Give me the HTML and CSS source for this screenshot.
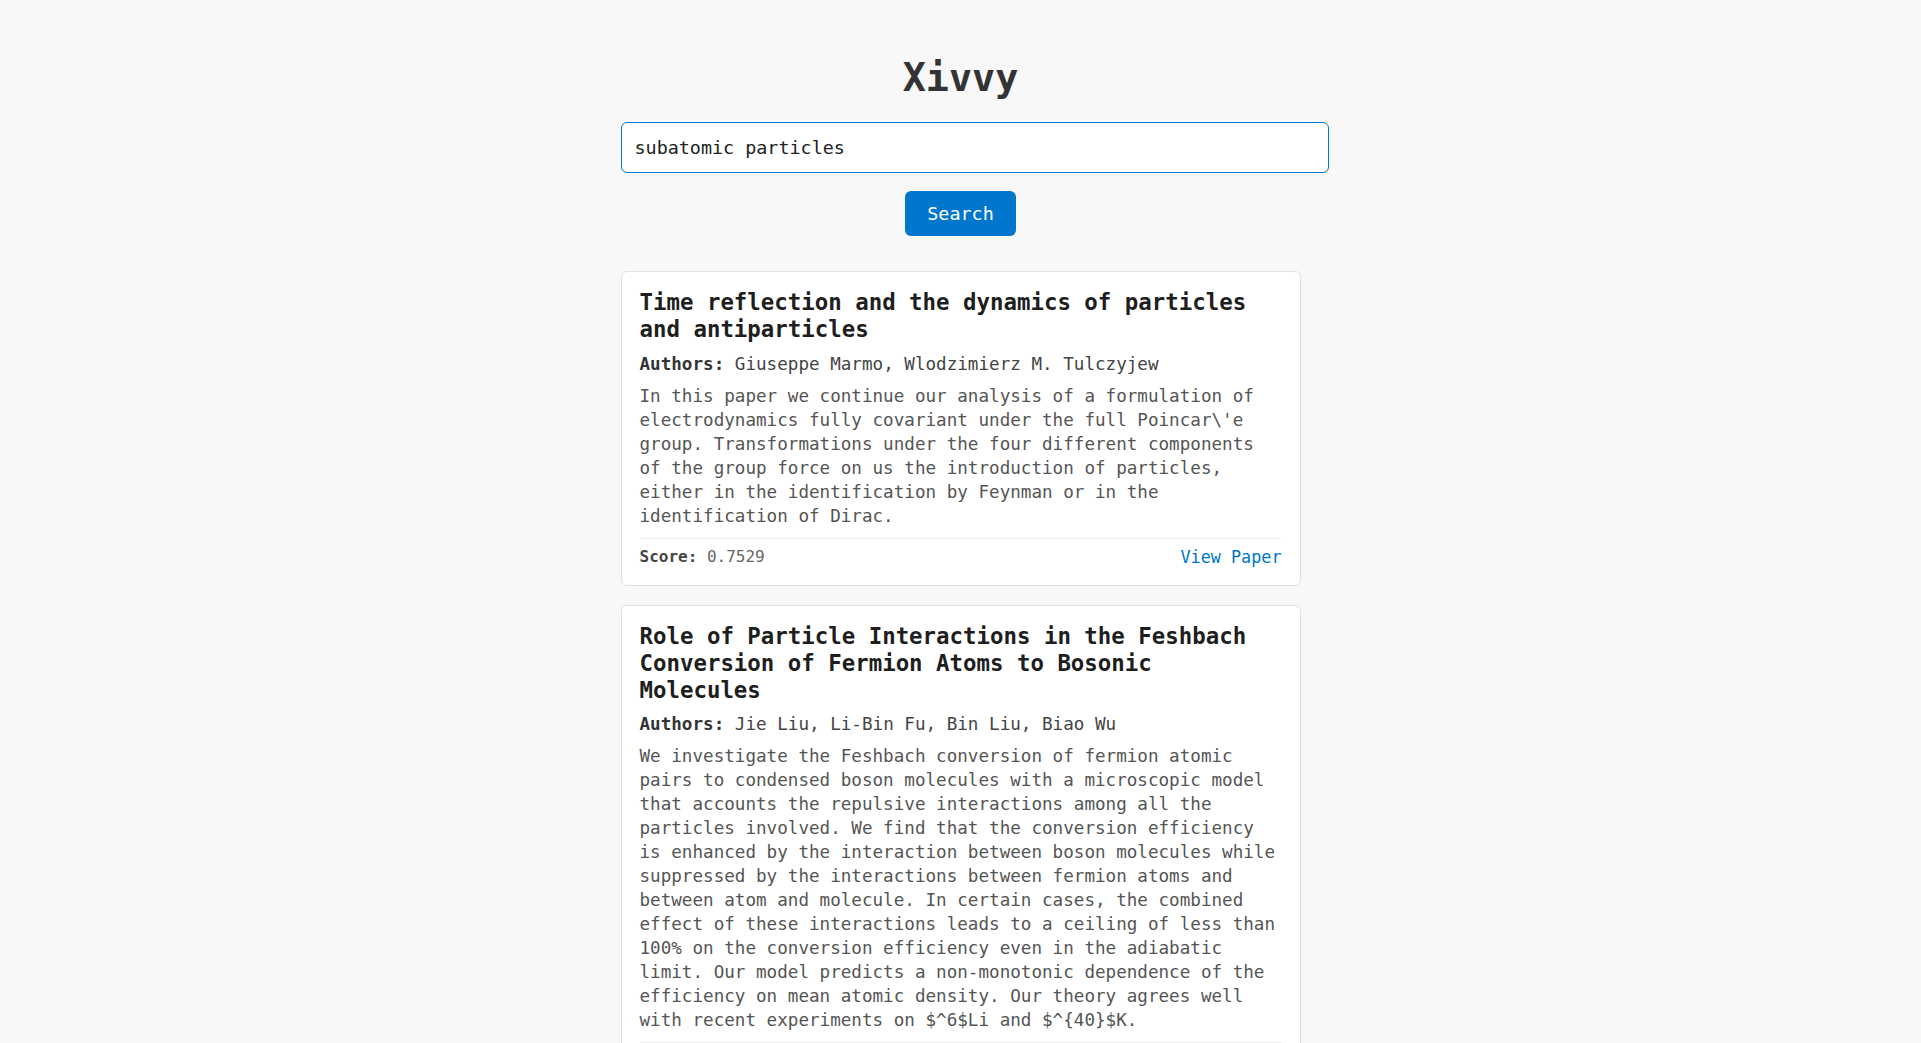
FILE: index.html
```html
<!DOCTYPE html>
<html lang="en">
<head>
<meta charset="utf-8">
<title>Xivvy</title>
<link rel="stylesheet" href="styles.css">
</head>
<body>
<main class="page">
  <h1 class="brand">Xivvy</h1>
  <form class="search">
    <input class="search-input" type="text" value="subatomic particles">
    <button class="search-button" type="button">Search</button>
  </form>
  <section class="results">
    <article class="card">
      <h2 class="card-title">Time reflection and the dynamics of particles and antiparticles</h2>
      <p class="card-authors"><strong>Authors:</strong> Giuseppe Marmo, Wlodzimierz M. Tulczyjew</p>
      <p class="card-abstract">In this paper we continue our analysis of a formulation of electrodynamics fully covariant under the full Poincar\'e group. Transformations under the four different components of the group force on us the introduction of particles, either in the identification by Feynman or in the identification of Dirac.</p>
      <div class="card-footer">
        <span class="score"><strong>Score:</strong> 0.7529</span>
        <a class="view-link" href="#">View Paper</a>
      </div>
    </article>
    <article class="card">
      <h2 class="card-title">Role of Particle Interactions in the Feshbach Conversion of Fermion Atoms to Bosonic Molecules</h2>
      <p class="card-authors"><strong>Authors:</strong> Jie Liu, Li-Bin Fu, Bin Liu, Biao Wu</p>
      <p class="card-abstract">We investigate the Feshbach conversion of fermion atomic pairs to condensed boson molecules with a microscopic model that accounts the repulsive interactions among all the particles involved. We find that the conversion efficiency is enhanced by the interaction between boson molecules while suppressed by the interactions between fermion atoms and between atom and molecule. In certain cases, the combined effect of these interactions leads to a ceiling of less than 100% on the conversion efficiency even in the adiabatic limit. Our model predicts a non-monotonic dependence of the efficiency on mean atomic density. Our theory agrees well with recent experiments on $^6$Li and $^{40}$K.</p>
      <div class="card-footer">
        <span class="score"><strong>Score:</strong> 0.7381</span>
        <a class="view-link" href="#">View Paper</a>
      </div>
    </article>
  </section>
</main>
</body>
</html>
```

FILE: styles.css
```css
html, body {
  margin: 0;
  padding: 0;
}

body {
  background: #f8f8f8;
  font-family: "DejaVu Sans Mono", "Liberation Mono", monospace;
  color: #333;
}

.page {
  max-width: 680px;
  margin: 0 auto;
  padding-top: 56px;
}

.brand {
  margin: 0 0 22px;
  font-size: 38.4px;
  line-height: 44px;
  font-weight: bold;
  text-align: center;
  color: #333;
}

.search {
  display: block;
  margin: 0;
}

.search-input {
  display: block;
  width: 100%;
  box-sizing: content-box;
  margin: 0;
  padding: 14px 13px;
  border: 1px solid #0077cc;
  border-radius: 6px;
  background: #fff;
  color: #222;
  font-family: "DejaVu Sans Mono", "Liberation Mono", monospace;
  font-size: 18.4px;
  line-height: normal;
  outline: none;
}

.search-button {
  display: block;
  margin: 18px auto 0;
  padding: 12px 22px;
  border: 0;
  border-radius: 6px;
  background: #0077cc;
  color: #fff;
  font-family: "DejaVu Sans Mono", "Liberation Mono", monospace;
  font-size: 18.4px;
  line-height: normal;
  cursor: pointer;
}

.results {
  margin-top: 35px;
}

.card {
  background: #fff;
  border: 1px solid #e0e0e0;
  border-radius: 6px;
  padding: 17px 18px 16px;
  margin-bottom: 19px;
  font-size: 17.6px;
  line-height: 24px;
}

.card-title {
  margin: 0 0 9px;
  font-size: 22.4px;
  line-height: 1.2;
  font-weight: bold;
  color: #1e1e1e;
}

.card-authors {
  margin: 0 0 8px;
  color: #444;
}

.card-authors strong {
  color: #333;
}

.card-abstract {
  margin: 0 0 10px;
  color: #555;
}

.card-footer {
  display: flex;
  justify-content: space-between;
  align-items: center;
  border-top: 1px solid #eee;
  padding-top: 6px;
}

.score {
  font-size: 16px;
  color: #666;
}

.score strong {
  color: #444;
}

.view-link {
  font-size: 16.8px;
  color: #0077cc;
  text-decoration: none;
}
```
